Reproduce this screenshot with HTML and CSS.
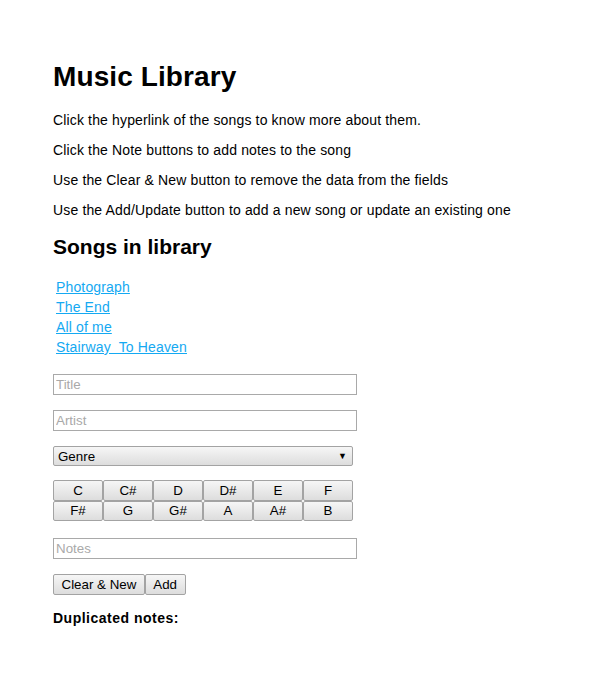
FILE: index.html
```html
<!DOCTYPE html>
<html>
<head>
<meta charset="utf-8">
<title>Music Library</title>
<link rel="stylesheet" href="styles.css">
</head>
<body>
<div class="page">
  <h1 class="title">Music Library</h1>
  <p class="info">Click the hyperlink of the songs to know more about them.</p>
  <p class="info">Click the Note buttons to add notes to the song</p>
  <p class="info">Use the Clear &amp; New button to remove the data from the fields</p>
  <p class="info">Use the Add/Update button to add a new song or update an existing one</p>
  <h2 class="subtitle">Songs in library</h2>
  <ul class="songs">
    <li><a href="#">Photograph</a></li>
    <li><a href="#">The End</a></li>
    <li><a href="#">All of me</a></li>
    <li><a href="#">Stairway&nbsp; To Heaven</a></li>
  </ul>
  <form class="form">
    <input class="field" type="text" placeholder="Title">
    <input class="field" type="text" placeholder="Artist">
    <div class="select"><span>Genre</span><span class="arrow">▼</span></div>
    <div class="notes">
      <button type="button" class="note">C</button>
      <button type="button" class="note">C#</button>
      <button type="button" class="note">D</button>
      <button type="button" class="note">D#</button>
      <button type="button" class="note">E</button>
      <button type="button" class="note">F</button>
      <button type="button" class="note">F#</button>
      <button type="button" class="note">G</button>
      <button type="button" class="note">G#</button>
      <button type="button" class="note">A</button>
      <button type="button" class="note">A#</button>
      <button type="button" class="note">B</button>
    </div>
    <input class="field notes-field" type="text" placeholder="Notes">
    <div class="actions">
      <button type="button" class="btn">Clear &amp; New</button>
      <button type="button" class="btn">Add</button>
    </div>
  </form>
  <p class="dup">Duplicated notes:</p>
</div>
</body>
</html>
```
FILE: styles.css
```css
html, body {
  margin: 0;
  padding: 0;
  background: #fff;
}
body {
  font-family: "Liberation Sans", Arial, sans-serif;
  font-size: 14px;
  color: #000;
}
.page {
  padding: 42px 53px 40px;
}
.title {
  font-size: 28px;
  font-weight: bold;
  letter-spacing: 0.1px;
  margin: 19px 0 19px;
}
.info {
  margin: 0 0 14px;
  letter-spacing: 0.15px;
}
.subtitle {
  font-size: 21px;
  font-weight: bold;
  margin: 17px 0 18px;
}
.songs {
  list-style: none;
  margin: 0 0 17px;
  padding: 0 0 0 3px;
  line-height: 20px;
  letter-spacing: 0.15px;
}
.songs a {
  color: #14a9f2;
  text-decoration: underline;
}
.form {
  display: flex;
  flex-direction: column;
  align-items: flex-start;
  margin: 0;
}
.field {
  box-sizing: border-box;
  width: 304px;
  height: 21px;
  margin: 0 0 15px;
  padding: 0 2px;
  border: 1px solid #a9a9a9;
  border-radius: 0;
  font-family: "Liberation Sans", Arial, sans-serif;
  font-size: 13.33px;
  background: #fff;
  outline: none;
}
.field::placeholder {
  color: #a9a9a9;
}
.select {
  box-sizing: border-box;
  width: 300px;
  height: 20px;
  margin: 0 0 14px;
  padding: 0 5px 0 4px;
  display: flex;
  align-items: center;
  justify-content: space-between;
  border: 1px solid #a3a3a3;
  border-radius: 2px;
  background: linear-gradient(#f6f6f6, #dddddd);
  font-size: 13.33px;
}
.arrow {
  font-size: 9px;
}
.notes {
  display: grid;
  grid-template-columns: repeat(6, 50px);
  grid-auto-rows: 20.5px;
  margin: 0 0 17px;
}
.note, .btn {
  box-sizing: border-box;
  margin: 0;
  border: 1px solid #a3a3a3;
  border-radius: 2px;
  background: linear-gradient(#f6f6f6, #dddddd);
  font-family: "Liberation Sans", Arial, sans-serif;
  font-size: 13.33px;
  color: #000;
  padding: 0;
}
.notes-field {
  margin-bottom: 15px;
}
.actions {
  display: flex;
}
.btn {
  height: 21px;
  padding: 0 7.5px;
}
.dup {
  margin: 15px 0 0;
  font-weight: bold;
  letter-spacing: 0.5px;
}
```
